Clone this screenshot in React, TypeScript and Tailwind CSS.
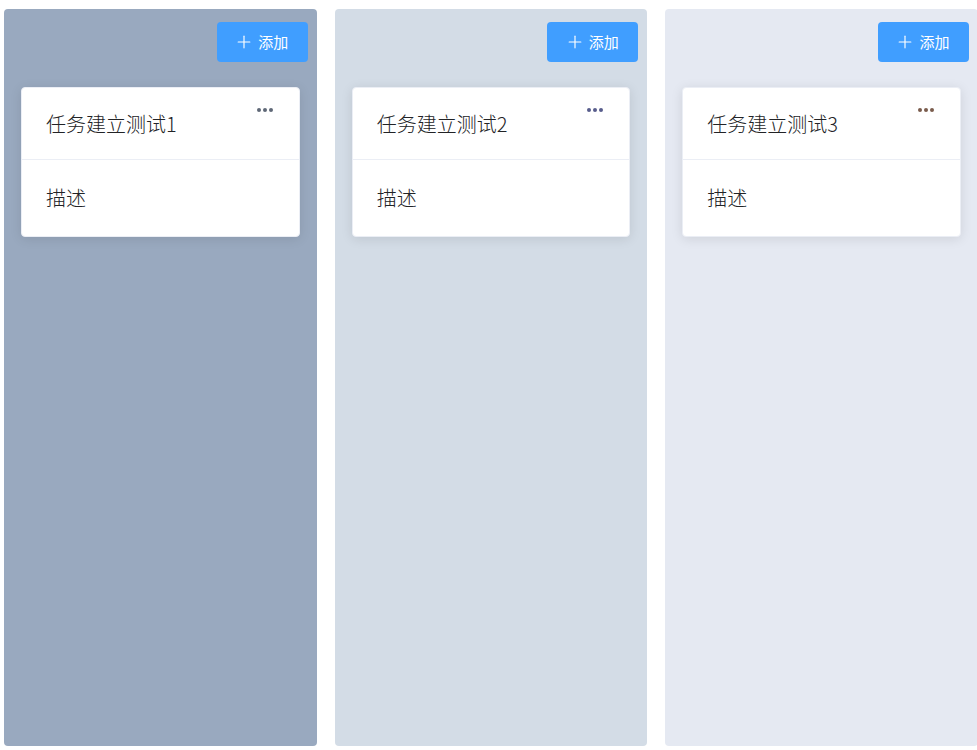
import { Plus } from "lucide-react";

const COLUMNS = [
  { bg: "bg-[#99a9bf]", title: "任务建立测试1", dot: "bg-[#5f6877]" },
  { bg: "bg-[#d3dce6]", title: "任务建立测试2", dot: "bg-[#585d8c]" },
  { bg: "bg-[#e5e9f2]", title: "任务建立测试3", dot: "bg-[#7a5c4c]" },
];

export default function App() {
  return (
    <div
      className="flex h-[750px] w-[977px] gap-[18px] overflow-hidden bg-white pl-[4px] pt-[9px] pb-[4px]"
      style={{ fontFamily: '"Noto Sans CJK SC", "Noto Sans", sans-serif' }}
    >
      {COLUMNS.map((col, i) => (
        <div key={i} className={`flex h-[737px] w-[312.67px] shrink-0 flex-col rounded-[4px] ${col.bg} pl-[17px] pr-[9px] pt-[13px]`}>
          <div className="flex justify-end">
            <button className="flex h-[40px] w-[91px] items-center justify-center gap-[4px] rounded-[4px] bg-[#409eff] pr-[2px] text-[15px] text-white">
              <Plus size={20} strokeWidth={1.4} />
              <span>添加</span>
            </button>
          </div>

          <div className="mt-[25px] mr-[8px] rounded-[4px] border border-[#ebeef5] bg-white text-[#303133] shadow-[0_2px_12px_0_rgba(0,0,0,0.1)]">
            <div className="relative flex h-[72px] items-center border-b border-[#ebeef5] px-[24px]">
              <span className="text-[20px] font-light text-[#222326]">{col.title}</span>
              <div className="absolute right-[26px] top-[20px] flex gap-[2px]">
                <span className={`h-[4px] w-[4px] rounded-full ${col.dot}`} />
                <span className={`h-[4px] w-[4px] rounded-full ${col.dot}`} />
                <span className={`h-[4px] w-[4px] rounded-full ${col.dot}`} />
              </div>
            </div>
            <div className="flex h-[76px] items-center px-[24px]">
              <span className="text-[20px] font-light text-[#222326]">描述</span>
            </div>
          </div>
        </div>
      ))}
    </div>
  );
}
